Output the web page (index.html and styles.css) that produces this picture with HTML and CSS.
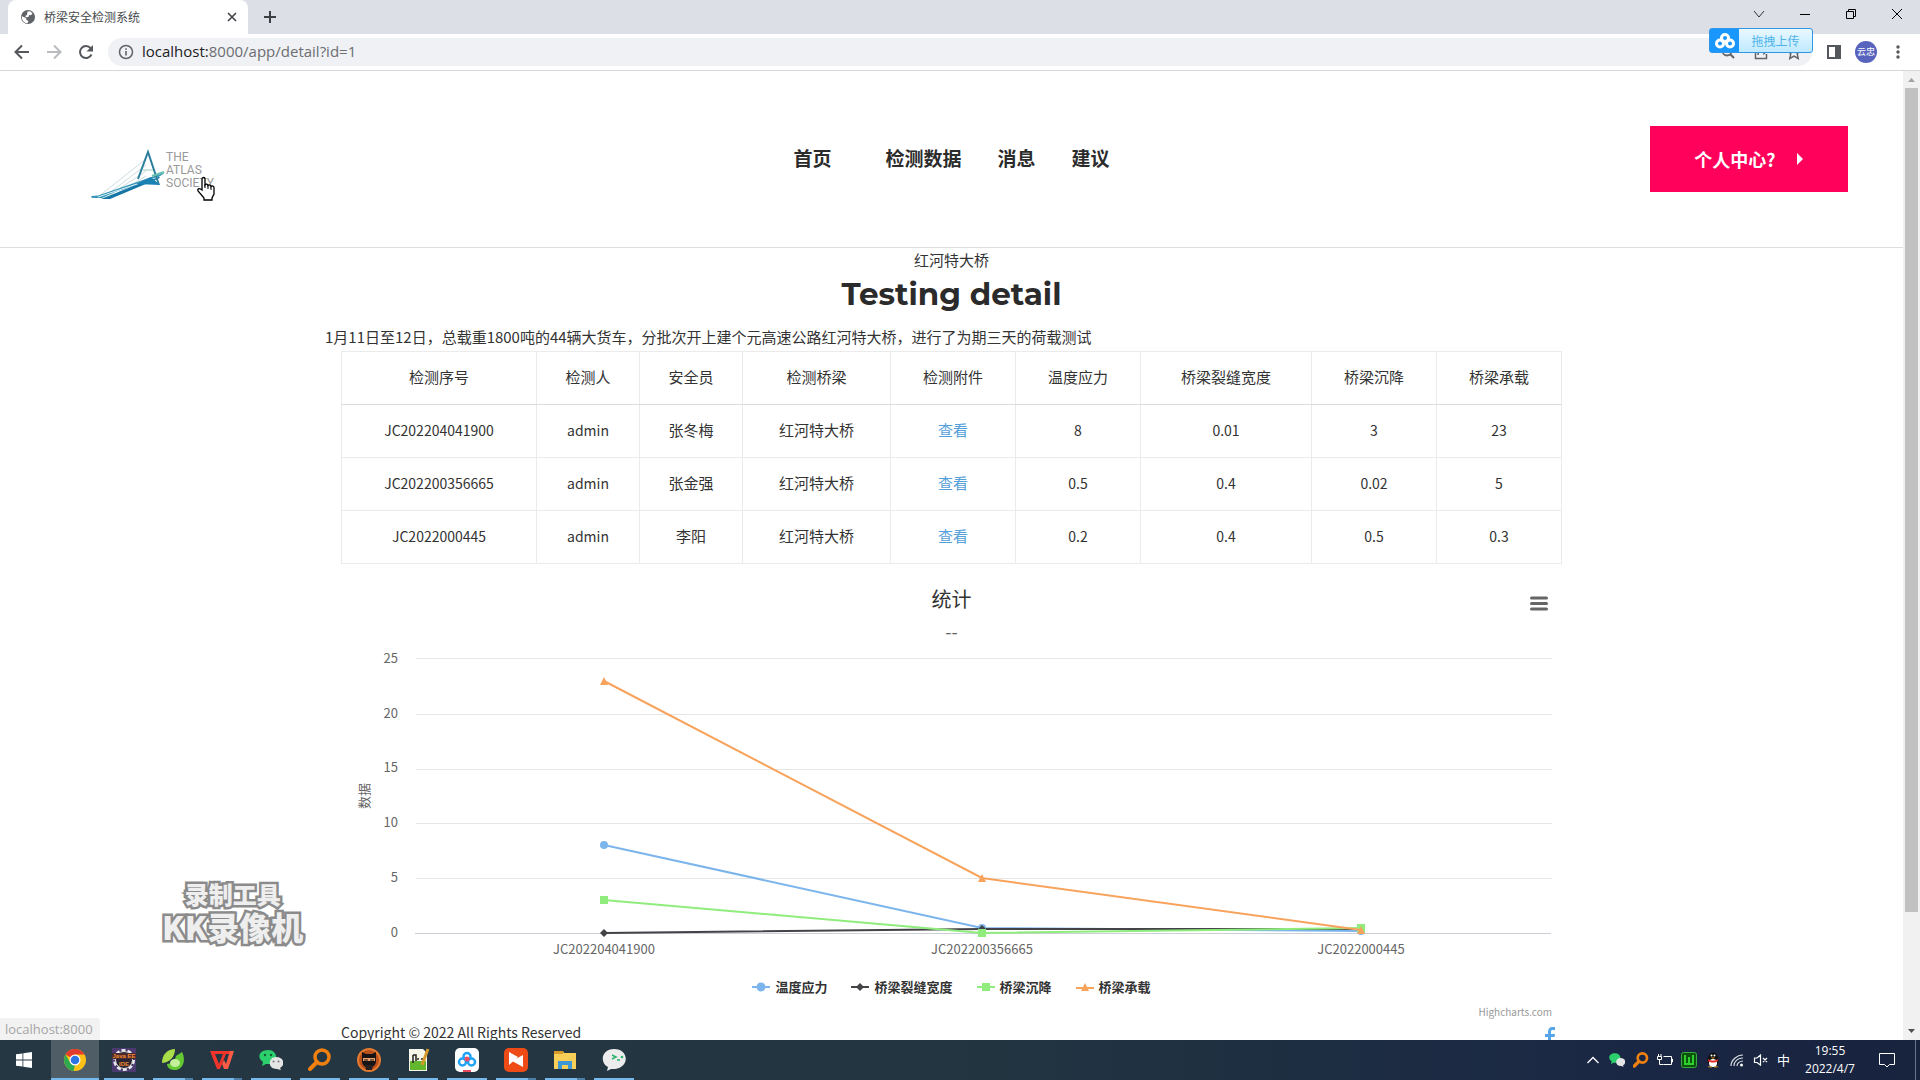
FILE: index.html
```html
<!DOCTYPE html>
<html lang="zh-CN">
<head>
<meta charset="utf-8">
<title>桥梁安全检测系统</title>
<link rel="stylesheet" href="styles.css">
</head>
<body>
<div class="desktop">
  <div class="tabstrip">
    <div class="tab">
      <svg class="i14" viewBox="0 0 14 14"><circle cx="7" cy="7" r="7" fill="#5f6368"/><path d="M1.500 6.500 5 8l.5 2 2 1-1 2.300A6 6 0 0 1 1 6zM6.500 1.500 9 1.300l2.500 2-1.500 2-2-.3-.5 2-2.500.2-.8-1.200L6 5z" fill="#fff"/></svg>
      <span class="tab-title">桥梁安全检测系统</span>
      <button class="plain" aria-label="关闭标签页"><svg class="i16" viewBox="0 0 16 16"><path d="M4 4l8 8M12 4l-8 8" stroke="#45494d" stroke-width="1.700"/></svg></button>
    </div>
    <button class="plain newtab" aria-label="新标签页"><svg class="i16" viewBox="0 0 16 16"><path d="M8 2v12M2 8h12" stroke="#3c4043" stroke-width="2"/></svg></button>
    <div class="winctl">
      <button class="plain" aria-label="搜索标签页"><svg class="i16" viewBox="0 0 16 16"><path d="M3 5l5 6 5-6" fill="none" stroke="#333"/></svg></button>
      <button class="plain" aria-label="最小化"><svg class="i16" viewBox="0 0 16 16"><path d="M3 8.500h10" stroke="#000"/></svg></button>
      <button class="plain" aria-label="还原"><svg class="i16" viewBox="0 0 16 16"><path d="M3.500 5.500h7v7h-7zM5.500 5.500v-2h7v7h-2" fill="none" stroke="#000"/></svg></button>
      <button class="plain" aria-label="关闭"><svg class="i16" viewBox="0 0 16 16"><path d="M3 3l10 10M13 3L3 13" stroke="#000"/></svg></button>
    </div>
  </div>
  <div class="toolbar">
    <button class="plain" aria-label="后退"><svg class="i16" viewBox="0 0 16 16"><path d="M15 8H2M8 1.500 1.500 8 8 14.500" fill="none" stroke="#54575b" stroke-width="2"/></svg></button>
    <button class="plain" aria-label="前进"><svg class="i16" viewBox="0 0 16 16"><path d="M1 8h13M8 1.500 14.500 8 8 14.500" fill="none" stroke="#b9bbbe" stroke-width="2"/></svg></button>
    <button class="plain" aria-label="重新加载"><svg class="i16" viewBox="0 0 16 16"><path d="M13.500 10.500A6 6 0 1 1 12.600 4.200L14 6" fill="none" stroke="#54575b" stroke-width="2"/><path d="M15 1v6.500H8.500z" fill="#54575b"/></svg></button>
    <div class="omnibox">
      <svg class="i16" viewBox="0 0 16 16"><circle cx="8" cy="8" r="6.500" fill="none" stroke="#5f6368" stroke-width="1.500"/><path d="M8 7v4.500M8 4.200v1.600" stroke="#5f6368" stroke-width="1.600"/></svg>
      <div class="url"><b>localhost:</b>8000/app/detail?id=1</div>
      <svg class="i16" viewBox="0 0 16 16"><circle cx="7" cy="7" r="4.500" fill="none" stroke="#5f6368" stroke-width="1.800"/><path d="M10 10l4 4" stroke="#5f6368" stroke-width="2"/></svg>
      <svg class="i16" viewBox="0 0 16 16"><path d="M6 3H2.500v11.500h11V10M5 11c0-4 2-6 6-6V2.500L15 6l-4 3.500V7" fill="none" stroke="#5f6368" stroke-width="1.500"/></svg>
      <svg class="i16" viewBox="0 0 16 16"><path d="M8 1.500l2 4.400 4.700.5-3.500 3.200 1 4.800L8 12l-4.200 2.400 1-4.800L1.300 6.400 6 5.900z" fill="none" stroke="#5f6368" stroke-width="1.500"/></svg>
    </div>
    <div class="tools">
      <button class="plain" aria-label="侧边栏"><svg class="i16" viewBox="0 0 16 16"><path d="M2 2h12v12H2z" fill="none" stroke="#54575b" stroke-width="2"/><path d="M9 2h5v12H9z" fill="#54575b"/></svg></button>
      <span class="avatar">云忠</span>
      <button class="plain" aria-label="菜单"><svg class="i16" viewBox="0 0 16 16"><g fill="#54575b"><circle cx="8" cy="3" r="1.700"/><circle cx="8" cy="8" r="1.700"/><circle cx="8" cy="13" r="1.700"/></g></svg></button>
    </div>
  </div>

  <div class="viewport">
    <div class="page">
      <header class="site-header">
        <a class="logo" href="#" aria-label="首页">
          <svg width="130" height="60" viewBox="0 0 130 60">
            <g fill="none" stroke="#cddde2"><path d="M8 52 56 14M14 52 56 20M20 50 56 26M28 48 56 31"/></g>
            <path d="M1 51 8 50.500 73 28 74 28.500 67 33 25 47 12 53H2z" fill="#3c98b8"/>
            <path d="M11 54 68 31 70 33 20 54z" fill="#1576a6"/>
            <path d="M8 52 68 32" stroke="#cfeef5"/>
            <path d="M48 34 58 7 69 40" fill="none" stroke="#2b7f9c" stroke-width="2"/>
            <path d="M52 25h11" stroke="#9dc9bd"/>
            <path d="M46 39 61 32 70 40z" fill="#1b80b2"/>
            <path d="M62 31 74 27" stroke="#69bfae" stroke-width="2"/>
            <g class="logo-text"><text x="76" y="16">THE</text><text x="76" y="29">ATLAS</text><text x="76" y="42">SOCIETY</text></g>
          </svg>
        </a>
        <nav class="nav"><a class="home" href="#">首页</a><a href="#">检测数据</a><a href="#">消息</a><a href="#">建议</a></nav>
        <button class="cta">个人中心?<svg width="8" height="12" viewBox="0 0 8 12"><path d="M1 0v12l6-6z" fill="#fff"/></svg></button>
      </header>

      <main class="content">
        <p class="bridge">红河特大桥</p>
        <h1>Testing detail</h1>
        <p class="desc">1月11日至12日，总载重1800吨的44辆大货车，分批次开上建个元高速公路红河特大桥，进行了为期三天的荷载测试</p>
        <div class="inner">
          <table class="data">
            <colgroup><col class="c-id"><col class="c-m"><col class="c-m"><col class="c-l"><col class="c-n"><col class="c-n"><col class="c-w"><col class="c-n"><col class="c-n"></colgroup>
            <thead><tr><th>检测序号</th><th>检测人</th><th>安全员</th><th>检测桥梁</th><th>检测附件</th><th>温度应力</th><th>桥梁裂缝宽度</th><th>桥梁沉降</th><th>桥梁承载</th></tr></thead>
            <tbody>
              <tr><td class="lat">JC202204041900</td><td class="lat">admin</td><td>张冬梅</td><td>红河特大桥</td><td><a href="#">查看</a></td><td class="lat">8</td><td class="lat">0.01</td><td class="lat">3</td><td class="lat">23</td></tr>
              <tr><td class="lat">JC202200356665</td><td class="lat">admin</td><td>张金强</td><td>红河特大桥</td><td><a href="#">查看</a></td><td class="lat">0.5</td><td class="lat">0.4</td><td class="lat">0.02</td><td class="lat">5</td></tr>
              <tr><td class="lat">JC2022000445</td><td class="lat">admin</td><td>李阳</td><td>红河特大桥</td><td><a href="#">查看</a></td><td class="lat">0.2</td><td class="lat">0.4</td><td class="lat">0.5</td><td class="lat">0.3</td></tr>
            </tbody>
          </table>

          <section class="chart">
            <div class="chart-head">
              <h2>统计</h2>
              <button class="plain" aria-label="图表菜单"><svg width="18" height="16" viewBox="0 0 18 16"><path d="M1.500 3h15M1.500 8.500h15M1.500 14h15" stroke="#666" stroke-width="3" stroke-linecap="round"/></svg></button>
            </div>
            <p class="subtitle">--</p>
            <svg class="plot" viewBox="0 0 1221 320" role="img" aria-label="统计">
              <path d="M75 13.500h1136M75 69.500h1136M75 124.500h1136M75 178.500h1136M75 233.500h1136" stroke="#e6e6e6"/>
              <path d="M74 288.500h1136" stroke="#ccd0d6"/>
              <g class="axis end"><text x="57" y="18">25</text><text x="57" y="73">20</text><text x="57" y="127">15</text><text x="57" y="182">10</text><text x="57" y="237">5</text><text x="57" y="292">0</text></g>
              <g class="axis mid"><text x="263" y="309">JC202204041900</text><text x="641" y="309">JC202200356665</text><text x="1020" y="309">JC2022000445</text><text transform="rotate(-90 28 151)" x="28" y="151">数据</text></g>
              <g fill="none" stroke-width="2">
                <path d="M263 200 641 283 1020 286" stroke="#7cb5ec"/><path d="M263 288 641 284 1020 284" stroke="#434348"/>
              </g>
              <g fill="#7cb5ec"><circle cx="263" cy="200" r="4"/><circle cx="641" cy="283" r="4"/><circle cx="1020" cy="286" r="4"/></g>
              <path d="M263 284l4 4-4 4-4-4zM641 280l4 4-4 4-4-4zM1020 280l4 4-4 4-4-4z" fill="#434348"/>
              <path d="M263 255 641 288 1020 283" fill="none" stroke="#90ed7d" stroke-width="2"/>
              <path d="M259 251h8v8h-8zM637 284h8v8h-8zM1016 279h8v8h-8z" fill="#90ed7d"/>
              <path d="M263 36 641 233 1020 285" fill="none" stroke="#f7a35c" stroke-width="2"/>
              <path d="M263 32l4 8h-8zM641 229l4 8h-8zM1020 281l4 8h-8z" fill="#f7a35c"/>
            </svg>
            <div class="legend">
              <button class="plain"><svg width="18" height="10" viewBox="0 0 18 10"><path d="M0 5h18" stroke="#7cb5ec" stroke-width="2"/><circle cx="9" cy="5" r="4.500" fill="#7cb5ec"/></svg>温度应力</button>
              <button class="plain"><svg width="18" height="10" viewBox="0 0 18 10"><path d="M0 5h18" stroke="#434348" stroke-width="2"/><path d="M9 1l4 4-4 4-4-4z" fill="#434348"/></svg>桥梁裂缝宽度</button>
              <button class="plain"><svg width="18" height="10" viewBox="0 0 18 10"><path d="M0 5h18" stroke="#90ed7d" stroke-width="2"/><path d="M5 1h8v8H5z" fill="#90ed7d"/></svg>桥梁沉降</button>
              <button class="plain"><svg width="18" height="10" viewBox="0 0 18 10"><path d="M0 6h18" stroke="#f7a35c" stroke-width="2"/><path d="M9 1l4 8H5z" fill="#f7a35c"/></svg>桥梁承载</button>
            </div>
            <a class="credits" href="#">Highcharts.com</a>
          </section>

          <footer class="foot">
            <span>Copyright © 2022 All Rights Reserved</span>
            <a href="#" aria-label="Facebook"><svg width="10" height="18" viewBox="0 0 10 18"><path d="M3 18V10H0V7h3V5c0-3 1.500-5 4-5h3v3H8C6.500 3 6 3.500 6 5v2h4l-.5 3H6v8z" fill="#55a5e8"/></svg></a>
          </footer>
        </div>
      </main>
      <div class="status">localhost:8000</div>
      <div class="watermark"><span class="wm-top">录制工具</span><span class="wm-main">KK录像机</span></div>
    </div>
    <div class="scrollbar">
      <svg width="17" height="17" viewBox="0 0 17 17"><path d="M5 11h7L8.500 7z" fill="#a3a3a3"/></svg>
      <div class="thumb"></div>
      <svg width="17" height="17" viewBox="0 0 17 17"><path d="M5 6h7l-3.500 4z" fill="#505050"/></svg>
    </div>
  </div>

  <div class="taskbar">
    <button class="plain start" aria-label="开始"><svg width="16" height="16" viewBox="0 0 16 16"><path d="M0 2.300 6.500 1.400v6.200H0zM7.300 1.300 16 0v7.600H7.300zM0 8.400h6.500v6.200L0 13.700zM7.300 8.400H16V16l-8.700-1.300z" fill="#fff"/></svg></button>
    <button class="plain app active" aria-label="Chrome"><svg class="i24" viewBox="0 0 24 24"><circle cx="12" cy="12" r="11" fill="#fbc116"/><path d="M12 12 2.500 6.500A11 11 0 0 1 21.600 6.600H12z" fill="#e33b2e"/><path d="M2.500 6.500 7.500 15 12 17 10.500 22.900A11 11 0 0 1 2.500 6.500z" fill="#2da94f"/><circle cx="12" cy="12" r="5.500" fill="#fff"/><circle cx="12" cy="12" r="4.300" fill="#2c74e4"/></svg></button>
    <button class="plain app" aria-label="Java EE IDE"><svg class="i24" viewBox="0 0 24 24"><path d="M0 0h24v24H0z" fill="#4a3a70"/><circle cx="12" cy="12" r="9.500" fill="#2b2233" stroke="#e8e8ee" stroke-width="3" stroke-dasharray="4 2"/><circle cx="12" cy="12" r="8.500" fill="#2b2233" stroke="#ddd"/><path d="M0 5h24v6H0z" fill="#4a2a30"/><g class="ee"><text x="12" y="10">Java EE</text><text x="12" y="18">IDE</text></g></svg></button>
    <button class="plain app multi" aria-label="Navicat"><svg class="i24" viewBox="0 0 24 24"><path d="M1 15C1 6 7 1 14 1c0 7-4 13-13 14z" fill="#a9dd4a"/><path d="M6 16c4 0 8-3 9-8l6-4c4 7 2 18-8 18-4 0-7-3-7-6z" fill="#64c833"/><ellipse cx="14" cy="15" rx="5" ry="4" fill="#c4f09b"/></svg></button>
    <button class="plain app multi" aria-label="WPS"><svg class="i24" viewBox="0 0 24 24"><path d="M0 3h21l-1 3H5l4 10 4-10h3l-6 15H7z" fill="#f1352b"/><path d="M20 3h4l-6 18h-4l-2-5 2-4 2 4z" fill="#ff5b45"/></svg></button>
    <button class="plain app" aria-label="微信"><svg class="i24" viewBox="0 0 24 24"><path d="M9 2c10 0 11 12 2 14H7l-4 2 1-4C-3 9 1 2 9 2z" fill="#2bcf6b"/><circle cx="6" cy="7" r="1.200" fill="#145c34"/><circle cx="12" cy="7" r="1.200" fill="#145c34"/><path d="M17 9c9 0 9 9 4 11l1 2-4-1C8 21 9 9 17 9z" fill="#e5e5e5"/><circle cx="14.500" cy="13.500" r="1" fill="#777"/><circle cx="19.500" cy="13.500" r="1" fill="#777"/></svg></button>
    <button class="plain app" aria-label="Everything"><svg class="i24" viewBox="0 0 24 24"><circle cx="14" cy="9" r="7" fill="none" stroke="#f08010" stroke-width="3.500"/><path d="M9 14 2 21" stroke="#f08010" stroke-width="4" stroke-linecap="round"/></svg></button>
    <button class="plain app" aria-label="Ninja"><svg class="i24" viewBox="0 0 24 24"><circle cx="12" cy="12" r="11" fill="#b9501c" stroke="#e67930" stroke-width="2"/><path d="M5 4l4 2h6l4-2v9c0 9-14 9-14 0z" fill="#161414"/><path d="M6 10h12v3H6z" fill="#e9a06d"/><path d="M7 12h4M13 12h4" stroke="#111"/><path d="M8 17h8l-1 5H9z" fill="#282020"/></svg></button>
    <button class="plain app" aria-label="Notepad++"><svg class="i24" viewBox="0 0 24 24"><path d="M3 1h14l4 4v18H3z" fill="#f5f5ea"/><path d="M4 13h16v9H4z" fill="#63b72c"/><path d="M7 7v8M7 7h3v6M11 11h2M15 11h2" fill="none" stroke="#222" stroke-width="1.500"/><path d="M22 1 16 17" stroke="#d69a2a" stroke-width="3"/></svg></button>
    <button class="plain app" aria-label="百度网盘"><svg class="i24" viewBox="0 0 24 24"><rect width="24" height="24" rx="5" fill="#fff"/><g fill="none" stroke="#20a2f5" stroke-width="2.500"><circle cx="7.500" cy="14" r="3.500"/><circle cx="16.500" cy="14" r="3.500"/><circle cx="12" cy="8.500" r="3.500"/></g><circle cx="12" cy="11" r="2.500" fill="#ee4e63"/><path d="M8 22h8v2H8z" fill="#e94c59"/></svg></button>
    <button class="plain app multi" aria-label="录像机"><svg class="i24" viewBox="0 0 24 24"><rect width="24" height="24" rx="5" fill="#ee4b16"/><path d="M5 4l9 5-9 8zM19 7v12l-11-6z" fill="#fff"/></svg></button>
    <button class="plain app multi" aria-label="资源管理器"><svg class="i24" viewBox="0 0 24 24"><path d="M1 3h9l1 2h12v16H1z" fill="#f9cf57"/><path d="M1 3h9v3H1z" fill="#d99b27"/><path d="M5 21v-8h14v8h-4v-4H9v4z" fill="#3f97d5"/></svg></button>
    <button class="plain app" aria-label="微信开发者工具"><svg class="i24" viewBox="0 0 24 24"><path d="M12 1c15 0 16 18 1 20H9l-4 2 1-4C-3 14 0 1 12 1z" fill="#ececec"/><path d="M10 7l4 2-4 2M15 12h3" fill="none" stroke="#31b36d" stroke-width="1.500"/><circle cx="20" cy="9" r="1.300" fill="#31b36d"/></svg></button>
    <div class="tray">
      <svg class="i16" viewBox="0 0 16 16"><path d="M2.500 11 8 5.500 13.500 11" fill="none" stroke="#fff" stroke-width="1.300"/></svg>
      <svg class="i16" viewBox="0 0 24 24"><path d="M9 2c10 0 11 12 2 14H7l-4 2 1-4C-3 9 1 2 9 2z" fill="#2bcf6b"/><path d="M17 9c9 0 9 9 4 11l1 2-4-1C8 21 9 9 17 9z" fill="#e5e5e5"/></svg>
      <svg class="i16" viewBox="0 0 24 24"><circle cx="14" cy="9" r="7" fill="none" stroke="#f08010" stroke-width="4"/><path d="M9 14 2 21" stroke="#f08010" stroke-width="5" stroke-linecap="round"/></svg>
      <svg class="i16" viewBox="0 0 16 16"><path d="M6.500 12.500H14.500v-8H6.500M14.500 7h1v3h-1M1.500 2v2M4 2v2M.5 4.500h4v3h-4zM2.500 8v4.500h4" fill="none" stroke="#fff"/></svg>
      <svg class="i16" viewBox="0 0 16 16"><rect x=".5" y=".5" width="15" height="15" rx="2" fill="#0c540d" stroke="#39ad3b"/><path d="M4 3v9h8V3M8 5v7" fill="none" stroke="#2dd02d" stroke-width="2"/></svg>
      <svg class="i16" viewBox="0 0 16 16"><ellipse cx="8" cy="8" rx="5.500" ry="7.500" fill="#111"/><ellipse cx="8" cy="11" rx="4" ry="4" fill="#fff"/><path d="M3 7c3 2 7 2 10 0v2c-3 2-7 2-10 0z" fill="#e02b28"/><circle cx="6.500" cy="3.500" r="1" fill="#fff"/><circle cx="9.500" cy="3.500" r="1" fill="#fff"/><path d="M6 5.500h4l-2 1.300zM2 15l4-1 1 1.500zM14 15l-4-1-1 1.500z" fill="#f5a623"/></svg>
      <svg class="i16" viewBox="0 0 16 16"><path d="M2 14C2 8 8 3 14 3M5 14c0-5 4-8 9-8M8 14c0-3 3-5 6-5" fill="none" stroke="#d5d9df" stroke-width="1.200"/><circle cx="12.500" cy="13" r="1.500" fill="#fff"/></svg>
      <svg class="i16" viewBox="0 0 16 16"><path d="M1.500 6v4.500H4L7.500 13V3L4 6zM10 6l4 4M14 6l-4 4" fill="none" stroke="#fff" stroke-width="1.200"/></svg>
      <span class="ime">中</span>
    </div>
    <div class="clock"><span>19:55</span><span>2022/4/7</span></div>
    <svg class="notice i16" viewBox="0 0 16 16"><path d="M.5 1.500h15v11h-5L8 15l-2.500-2.500h-5z" fill="none" stroke="#fff"/></svg>
    <div class="peek"></div>
  </div>

  <div class="upload">
    <div class="upload-icon"><svg width="20" height="16" viewBox="0 0 20 16"><g fill="none" stroke="#fff" stroke-width="3"><circle cx="5" cy="10.500" r="3.500"/><circle cx="15" cy="10.500" r="3.500"/><circle cx="10" cy="5" r="3.500"/></g></svg></div>
    <span>拖拽上传</span>
  </div>
  <svg class="cursor" width="20" height="26" viewBox="0 0 20 26"><path d="M6 14V3c0-2 3-2 3 0v6c1-1.500 3-1 3 .5 1-1 3-.5 3 1 1-1 3-.5 3 1V18l-2 4v2H8v-2L2 15c-1-2 1-3 2.500-2z" fill="#fff" stroke="#000" stroke-width="1.300"/><path d="M9 8v4M12 9v4M15 10v4" stroke="#000"/></svg>
</div>
</body>
</html>
```
FILE: styles.css
```css
* { box-sizing: border-box; }
body {
  margin: 0;
  font-family: "Noto Sans CJK SC", "Noto Sans", sans-serif;
  font-size: 15px;
  line-height: 24px;
  color: #333;
  background: #fff;
}
p, h1, h2 { margin: 0; }
a { text-decoration: none; color: inherit; }
svg { display: block; flex: none; }
.plain { border: 0; background: none; padding: 0; font: inherit; color: inherit; display: flex; align-items: center; justify-content: center; }
.i14 { width: 14px; height: 14px; }
.i16 { width: 16px; height: 16px; }
.i24 { width: 24px; height: 24px; }
.desktop { height: 100vh; display: flex; flex-direction: column; overflow: hidden; position: relative; }

/* browser chrome */
.tabstrip { height: 34px; flex: none; background: #dcdfe6; display: flex; padding-left: 8px; }
.tab { width: 240px; background: #fff; border-radius: 8px 8px 0 0; display: flex; align-items: center; padding: 0 8px 0 13px; gap: 9px; }
.tab-title { flex: 1; font-size: 12px; color: #45494d; }
.newtab { margin-left: 14px; }
.winctl { margin-left: auto; display: flex; padding-bottom: 6px; }
.winctl button { width: 46px; }
.toolbar { height: 37px; flex: none; border-bottom: 1px solid #d5d7da; display: flex; align-items: center; padding: 0 14px; gap: 16px; }
.omnibox { flex: 1; height: 28px; margin: 0 -2px; border-radius: 14px; background: #f0f1f4; display: flex; align-items: center; gap: 17px; padding: 0 10px; }
.url { flex: 1; margin-left: -9px; padding-bottom: 2px; font-family: "Open Sans", sans-serif; font-size: 15px; color: #6b6e72; }
.url b { font-weight: 400; color: #202124; }
.tools { display: flex; align-items: center; gap: 13px; }
.avatar { width: 22px; height: 22px; border-radius: 11px; background: #5763bd; color: #fff; font-size: 9px; line-height: 22px; text-align: center; }

/* page area */
.viewport { flex: 1; min-height: 0; display: flex; }
.page { flex: 1; min-width: 0; overflow: hidden; position: relative; }
.scrollbar { width: 17px; background: #f1f1f1; display: flex; flex-direction: column; }
.thumb { flex: 0 0 85%; margin: 0 2px; background: #c1c1c1; }
.scrollbar svg:last-child { margin-top: auto; }

.site-header { height: 177px; border-bottom: 1px solid #ddd; display: grid; grid-template-columns: 1fr auto 1fr; align-items: center; padding: 0 55px 0 90px; }
.logo { width: 130px; padding-top: 32px; }
.logo-text { font: 12px Roboto, sans-serif; fill: #999; }
.nav { display: flex; gap: 36px; margin-left: -35px; padding-bottom: 2px; font-size: 19px; font-weight: 700; color: #2b2b2b; }
.home { margin-right: 18px; }
.cta { justify-self: end; width: 198px; height: 66px; padding-bottom: 2px; border: 0; background: #ff005a; color: #fff; font: 700 18px "Noto Sans CJK SC", sans-serif; display: flex; align-items: center; justify-content: center; gap: 20px; }

.content { max-width: 1253px; margin: 0 auto; }
.bridge { text-align: center; }
h1 { font-family: Montserrat, Inter, sans-serif; font-size: 31px; line-height: 44px; font-weight: 700; text-align: center; color: #2b2b2b; }
.desc { margin: 9px 0 2px; }
.inner { padding: 0 16px; }
.data { width: 100%; table-layout: fixed; border-collapse: collapse; text-align: center; }
.data th, .data td { border: 1px solid #ebebeb; height: 53px; padding: 0 0 2px; font-weight: 400; }
.data th { border-bottom-color: #dcdcdc; }
.data td:last-child, .data th:last-child { border-left-color: #dcdcdc; }
.data .lat { font-size: 14px; }
.data a { color: #55a0d8; }
.c-id { width: 195px; }
.c-m { width: 103px; }
.c-l { width: 148px; }
.c-n { width: 125px; }
.c-w { width: 171px; }

.chart-head { display: grid; grid-template-columns: 1fr auto 1fr; align-items: center; padding: 19px 14px 0; }
.chart-head h2 { grid-column: 2; font-size: 20px; line-height: 32px; font-weight: 400; }
.chart-head button { justify-self: end; padding-top: 8px; }
.subtitle { text-align: center; color: #666; line-height: 28px; padding-top: 2px; font-size: 18px; }
.plot { width: 100%; height: auto; }
.axis { font-size: 13px; fill: #666; }
.end { text-anchor: end; }
.mid { text-anchor: middle; }
.legend { display: flex; justify-content: center; gap: 24px; padding-top: 10px; }
.legend button { font-size: 13px; font-weight: 700; gap: 5px; }
.credits { display: block; text-align: right; padding: 3px 10px 0 0; font-size: 10px; line-height: 20px; color: #999; }
.foot { display: flex; justify-content: space-between; padding: 0 7px 0 0; font-size: 14px; line-height: 20px; }
.foot a { padding-top: 5px; }

/* overlays */
.status { position: absolute; left: 0; bottom: 0; padding: 0 7px 0 5px; height: 22px; line-height: 22px; font-size: 13px; background: #f2f2f2; color: #a5a5a5; border-top-right-radius: 3px; font-family: "Open Sans", sans-serif; }
.watermark { position: absolute; left: 162px; top: 807px; display: flex; flex-direction: column; align-items: center; font-weight: 900; color: #eee; -webkit-text-stroke: 5px #8b8b8b; paint-order: stroke fill; }
.wm-top { font-size: 24px; line-height: 32px; }
.wm-main { font-size: 32px; line-height: 32px; }
.upload { position: absolute; right: 107px; top: 28px; width: 104px; height: 25px; display: flex; align-items: center; border: 1px solid #3096e6; border-radius: 3px; background: linear-gradient(#e9f8ff, #bfeaff); color: #4fb3e8; font-size: 12px; }
.upload span { flex: 1; text-align: center; }
.upload-icon { width: 29px; height: 100%; background: #1a97fc; display: grid; place-items: center; }
.cursor { position: absolute; left: 196px; top: 176px; }

/* taskbar */
.taskbar { height: 40px; flex: none; display: flex; background: linear-gradient(90deg, #243742, #223540 50%, #1a2744 85%, #18233e); color: #fff; }
.start { width: 48px; margin-right: 3px; }
.app { width: 48px; margin-right: 1px; padding: 0 4px; position: relative; }
.app::after { content: ""; position: absolute; left: 4px; right: 4px; bottom: 0; height: 2px; background: #76b9ed; }
.multi::after { background: linear-gradient(90deg, #76b9ed 80%, #4d7fa6 80%); }
.active { background: #4f5d66; }
.active::after { left: 0; right: 0; }
.ee { font: 700 6px "Liberation Sans", sans-serif; fill: #f08a2c; text-anchor: middle; }
.tray { margin-left: auto; display: flex; align-items: center; gap: 8px; }
.ime { font-size: 13px; line-height: 20px; }
.clock { width: 80px; display: flex; flex-direction: column; justify-content: center; text-align: center; font: 12px/18px "Open Sans", sans-serif; }
.notice { align-self: center; margin: 0 20px 0 9px; }
.peek { width: 5px; border-left: 1px solid #6c7689; }
```
